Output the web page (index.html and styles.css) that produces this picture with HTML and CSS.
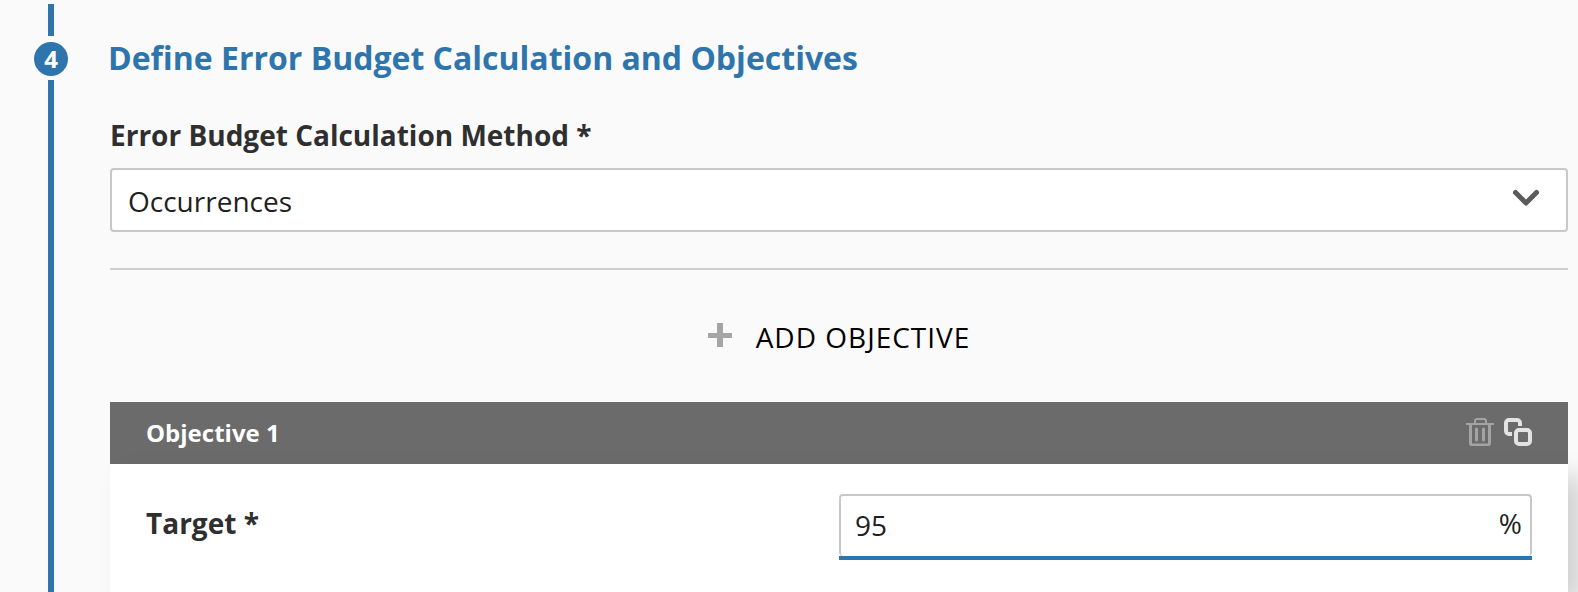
FILE: index.html
```html
<!DOCTYPE html>
<html lang="en">

<head>
  <meta charset="UTF-8" />
  <meta name="viewport" content="width=device-width, initial-scale=1.0" />
  <title>Define Error Budget Calculation and Objectives</title>
  <link rel="stylesheet" href="styles.css">
</head>

<body>
  <form class="step">
    <div class="rail">
      <span class="rail-line rail-line-top"></span>
      <span class="marker"><span class="marker-number">4</span></span>
      <span class="rail-line rail-line-rest"></span>
    </div>

    <div class="content">
      <h2 class="step-title">Define Error Budget Calculation and Objectives</h2>

      <div class="fields">
        <label class="label" for="method">Error Budget Calculation Method *</label>
        <div class="select-box">
          <select class="select" id="method">
            <option>Occurrences</option>
          </select>
          <svg class="chevron" width="28" height="18" viewBox="0 0 28 18" aria-hidden="true">
            <path d="M3.500 3.500L14 14L24.500 3.500" fill="none" stroke="#5b5b5b" stroke-width="5" stroke-linecap="round" stroke-linejoin="round" />
          </svg>
        </div>

        <hr class="divider">

        <button class="add-button" type="button">
          <svg class="plus" width="24" height="24" viewBox="0 0 24 24" aria-hidden="true">
            <path d="M9 0h6v10h9v5h-9v9H9v-9H0v-5h9z" fill="#a6a6a6" />
          </svg>
          ADD OBJECTIVE
        </button>

        <section class="objective">
          <header class="objective-header">
            <h3 class="objective-title">Objective 1</h3>
            <div class="objective-actions">
              <button class="icon-button" type="button" aria-label="Delete objective">
                <svg width="28" height="28" viewBox="0 0 28 28" fill="none" stroke="#a3a3a3" aria-hidden="true">
                  <path d="M0 6h28" stroke-width="2" />
                  <path d="M9 6V3a2 2 0 0 1 2-2h7a2 2 0 0 1 2 2v3" stroke-width="2" />
                  <path d="M4.500 6v19a2 2 0 0 0 2 2h15a2 2 0 0 0 2-2V6" stroke-width="3" />
                  <path d="M10.500 11v11M17.500 11v11" stroke-width="3" stroke-linecap="round" />
                </svg>
              </button>
              <button class="icon-button" type="button" aria-label="Copy objective">
                <svg width="28" height="28" viewBox="0 0 28 28" fill="none" stroke="#e3e3e3" stroke-width="4" aria-hidden="true">
                  <path d="M16 8V5a3 3 0 0 0-3-3H5a3 3 0 0 0-3 3v8a3 3 0 0 0 3 3h3" />
                  <rect x="12" y="12" width="14" height="14" rx="3" />
                </svg>
              </button>
            </div>
          </header>

          <div class="objective-body">
            <label class="label target-label" for="target">Target *</label>
            <div class="target-box">
              <input class="target-input" id="target" type="text" inputmode="decimal" value="95">
              <span class="unit">%</span>
            </div>
          </div>
        </section>
      </div>
    </div>
  </form>
</body>

</html>
```

FILE: styles.css
```css
* {
  box-sizing: border-box;
}

body {
  margin: 0;
  background-color: #fafafa;
  color: #2f2f2f;
  font-family: "Open Sans", "Noto Sans", sans-serif;
  font-size: 28px;
  line-height: 38px;
}

.step {
  display: flex;
  min-height: 100vh;
  padding-right: 10px;
}

/* step rail */
.rail {
  display: flex;
  flex-direction: column;
  align-items: center;
  flex: none;
  width: 102px;
  padding-top: 4px;
}

.rail-line {
  width: 6px;
  background-color: #2f75ad;
}

.rail-line-top {
  height: 32px;
}

.rail-line-rest {
  flex: 1;
}

.marker {
  height: 44px;
  padding-top: 6px;
}

.marker-number {
  display: block;
  width: 34px;
  height: 34px;
  border-radius: 50%;
  background-color: #2f75ad;
  color: #fff;
  font-size: 24px;
  font-weight: 700;
  line-height: 34px;
  text-align: center;
}

.content {
  display: flex;
  flex-direction: column;
  flex: 1;
  min-width: 0;
  padding: 36px 0 0 6px;
}

.step-title {
  margin: 0 0 36px;
  color: #2f75ad;
  font-size: 32px;
  font-weight: 700;
  line-height: 44px;
}

.fields {
  display: flex;
  flex-direction: column;
  flex: 1;
  padding-left: 2px;
}

.label {
  font-weight: 700;
}

/* method drop-down */
.select-box {
  position: relative;
  margin-top: 14px;
}

.select {
  display: block;
  width: 100%;
  height: 64px;
  padding: 2px 64px 0 16px;
  border: 2px solid #c8c8c8;
  border-radius: 4px;
  background-color: #fff;
  color: #1f1f1f;
  font: inherit;
  appearance: none;
}

.chevron {
  position: absolute;
  top: 21px;
  right: 28px;
  pointer-events: none;
}

.divider {
  width: 100%;
  height: 2px;
  margin: 36px 0 0;
  border: 0;
  background-color: #cecece;
}

.add-button {
  display: flex;
  align-items: center;
  align-self: center;
  gap: 24px;
  margin: 48px 0 46px;
  padding: 0;
  border: 0;
  background: none;
  color: #000;
  font: inherit;
  letter-spacing: 1px;
  cursor: pointer;
}

.plus {
  margin-bottom: 4px;
}

/* objective card */
.objective {
  display: flex;
  flex-direction: column;
  flex: 1;
}

.objective-header {
  display: flex;
  align-items: center;
  justify-content: space-between;
  height: 62px;
  padding: 0 36px;
  background-color: #6b6b6b;
}

.objective-title {
  margin: 0;
  color: #fff;
  font-size: 24px;
  font-weight: 700;
  line-height: 32px;
}

.objective-actions {
  display: flex;
  gap: 10px;
  margin-bottom: 2px;
}

.icon-button {
  display: flex;
  padding: 0;
  border: 0;
  background: none;
  cursor: pointer;
}

.objective-body {
  display: grid;
  grid-template-columns: 1fr 1fr;
  flex: 1;
  align-items: start;
  padding: 30px 36px 32px;
  background-color: #fff;
  box-shadow: 16px 12px 24px rgba(0, 0, 0, 0.16);
}

.target-label {
  padding-top: 10px;
}

.target-box {
  position: relative;
  border-bottom: 4px solid #2f75ad;
}

.target-input {
  display: block;
  width: 100%;
  height: 62px;
  padding: 0 48px 2px 14px;
  border: 2px solid #c8c8c8;
  border-bottom: 0;
  border-radius: 4px;
  background-color: #fff;
  color: #1f1f1f;
  font: inherit;
  outline: none;
}

.unit {
  position: absolute;
  top: 10px;
  right: 10px;
  color: #1f1f1f;
}
```
